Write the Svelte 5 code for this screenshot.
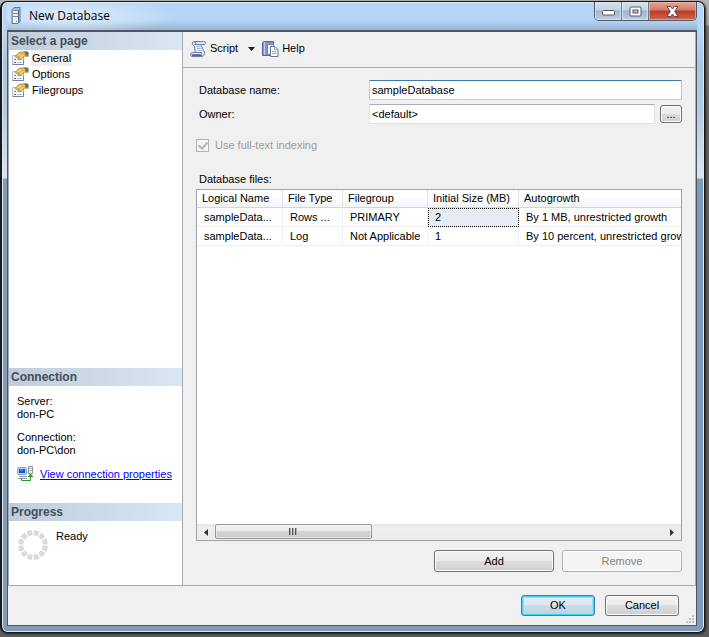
<script>
  let name = $state('sampleDatabase');
  let owner = $state('<default>');
  const pages = ['General', 'Options', 'Filegroups'];
  const columns = ['Logical Name', 'File Type', 'Filegroup', 'Initial Size (MB)', 'Autogrowth'];
  const files = [
    ['sampleData...', 'Rows ...', 'PRIMARY', '2', 'By 1 MB, unrestricted growth'],
    ['sampleData...', 'Log', 'Not Applicable', '1', 'By 10 percent, unrestricted growth']
  ];
  const spokes = Array.from({ length: 12 }, (_, i) => i * 30 + 15);
</script>

<div class="desktop">
  <section class="window" aria-label="New Database">
    <header class="titlebar">
      <svg class="server" width="10" height="17" viewBox="0 0 10 17">
        <path d="M1 2.5 3 .5h6v14l-2 2H1z" fill="#a9bdd2" stroke="#64788f" />
        <path d="M2 3h5v13H2z" fill="#e9f1f8" />
        <path d="M2 3.5h5M2 6.5h5M2 9.5h5" stroke="#6d86a3" />
        <path d="M7.500 3v13" stroke="#5c7089" />
        <path d="M5 14h1v1H5z" fill="#5b9a54" />
      </svg>
      <h1>New Database</h1>
      <div class="caption">
        <button class="cap" aria-label="Minimize">
          <svg class="low" width="13" height="6" viewBox="0 0 13 6"><rect x=".5" y=".5" width="12" height="4.500" rx="1" fill="#fff" stroke="#535a66" /></svg>
        </button>
        <button class="cap" aria-label="Maximize">
          <svg width="13" height="11" viewBox="0 0 13 11"><rect x="1" y="1" width="11" height="9" rx="1" fill="#fff" stroke="#535a66" /><rect x="4" y="4" width="5" height="3" fill="#b5c4d6" stroke="#535a66" /></svg>
        </button>
        <button class="cap close" aria-label="Close">
          <svg width="13" height="11" viewBox="0 0 13 11"><path d="M1 .5h3.500l2 2.500 2-2.500H12L8.700 5.500 12 10.500H8.500l-2-2.500-2 2.500H1l3.300-5z" fill="#fff" stroke="#5e4a55" stroke-linejoin="round" /></svg>
        </button>
      </div>
    </header>

    <div class="client">
      <div class="body">
        <aside>
          <h2>Select a page</h2>
          <nav>
            {#each pages as page, i}
              <button class="page">
                <svg width="17" height="15" viewBox="0 0 17 15">
                  <path d="M.5 4.500h11v9H.5z" fill="#fafbff" stroke="#b4bcd6" />
                  <path d="M.5 13.500h11v-5" fill="none" stroke="#7481a8" />
                  <path d="M2 8.500h2M2 11.500h2" stroke="#5d6cb0" />
                  <path d="M5 8.500h5M5 11.500h5" stroke="#b3bcdd" />
                  <path d="M3 5.500 6 2.300 8.500 1l2 .3 1-.8L15 1.200v4.300L12.500 5l-2 2-3 2L6 7.800l1.300-1.700-2 .6z" fill="#e8b553" stroke="#94783e" stroke-width=".7" />
                  <path d="m6 4.500 3-2M8.500 6.500l3-2.300" stroke="#fff0b5" />
                  <path d="m12.500.5 4 .2v5.200L13.500 4z" fill="#66725c" />
                </svg>
                <span class:current={i === 0}>{page}</span>
              </button>
            {/each}
          </nav>
          <h2>Connection</h2>
          <div class="connection">
            <p>Server:<br />don-PC</p>
            <p>Connection:<br />don-PC\don</p>
            <div class="props">
              <svg width="17" height="16" viewBox="0 0 17 16">
                <rect x=".5" y="1.500" width="9" height="7" rx="1" fill="#b9d1ef" stroke="#88a3cc" />
                <rect x="2" y="3" width="6" height="4" fill="#1557c8" />
                <path d="M3 4h3" stroke="#77b4f5" />
                <path d="M2 10.500h8M1 12.500h9" stroke="#8994a8" />
                <path d="M11.500.5h4v7h-4z" fill="#edf1f7" stroke="#8f97a3" />
                <path d="M12 2.500h3M12 4.500h3" stroke="#b4bcc8" />
                <path d="M4.500 12v2.500h9V10" fill="none" stroke="#2f9a22" />
                <path d="m10.500 11 3-3.500 3 3.500z" fill="#2f9a22" />
              </svg>
              <a href="#connection">View connection properties</a>
            </div>
          </div>
          <h2>Progress</h2>
          <div class="progress">
            <svg width="30" height="30" viewBox="-15 -15 30 30">
              {#each spokes as angle}
                <path d="M-3-14.500Q0-15.500 3-14.500L2-9.500Q0-10-2-9.500z" fill="#dadada" transform="rotate({angle})" />
              {/each}
            </svg>
            <span>Ready</span>
          </div>
        </aside>

        <main>
          <div class="toolbar">
            <button class="tool">
              <svg width="17" height="16" viewBox="0 0 17 16">
                <path d="M4 .5h9.500q2.500 0 2 2-.5 1.500-3 1-1.500.3-.8 2l1.800 4q1.500 1 1 3-.5 3-2.500 3H2q-1.500-.5-1.500-2t2-2h2.700L4.500 5.500Q2.300 4 2.300 2.500T4 .5z" fill="#dce8f5" stroke="#6d80a2" />
                <path d="M4 .8q2 .2 2 1.500T4.500 3.500H13M1 12.500q.5 1 2 1h7.500q2-.5 1-2H5" fill="none" stroke="#6d80a2" />
                <path d="M6.500 5.500h4M7 7.500h4M8 9.500h4" stroke="#aac0dc" />
                <path d="M2 14.500h10" stroke="#53658a" />
              </svg>
              <span>Script</span>
              <svg class="arrow" width="7" height="4" viewBox="0 0 7 4"><path d="M0 0h7L3.500 4z" fill="#1b1b1b" /></svg>
            </button>
            <button class="tool">
              <svg width="17" height="16" viewBox="0 0 17 16">
                <path d="M.5 1.500 2 .5h9.500v14H.5z" fill="#8a92c6" stroke="#5c649b" />
                <path d="M2.500 1v13" stroke="#c9cdec" />
                <path d="M5.500 3.500h6v10h-6z" fill="#eef1fa" stroke="#7b86ad" />
                <path d="M8.500 5.500h4.500l3 3v7H8.500z" fill="#fff" stroke="#6375a0" />
                <path d="M12.500 5.500v3H16M10 10.500h4.500M10 12.500h4.500" fill="none" stroke="#93a6ca" />
              </svg>
              <span>Help</span>
            </button>
          </div>

          <div class="content">
            <div class="fields">
              <label for="dbname">Database name:</label>
              <input id="dbname" class="focused" bind:value={name} />
              <label for="owner">Owner:</label>
              <div class="owner">
                <input id="owner" bind:value={owner} />
                <button class="btn browse" aria-label="Browse for owner">...</button>
              </div>
            </div>

            <label class="check">
              <input type="checkbox" checked disabled />
              <span>Use full-text indexing</span>
            </label>

            <div class="caption-text" id="files-label">Database files:</div>
            <div class="grid">
              <div class="viewport">
                <table aria-labelledby="files-label">
                  <colgroup><col class="c1" /><col class="c2" /><col class="c3" /><col class="c4" /><col class="c5" /></colgroup>
                  <thead>
                    <tr>{#each columns as c}<th>{c}</th>{/each}</tr>
                  </thead>
                  <tbody>
                    {#each files as row, r}
                      <tr>{#each row as cell, c}<td class:selected={r === 0 && c === 3}>{cell}</td>{/each}</tr>
                    {/each}
                  </tbody>
                </table>
              </div>
              <div class="scrollbar">
                <button aria-label="Scroll left"><svg width="4" height="7" viewBox="0 0 4 7"><path d="M4 0v7L0 3.500z" fill="#333" /></svg></button>
                <div class="track">
                  <div class="thumb"><i></i><i></i><i></i></div>
                </div>
                <button aria-label="Scroll right"><svg width="4" height="7" viewBox="0 0 4 7"><path d="M0 0v7l4-3.500z" fill="#333" /></svg></button>
              </div>
            </div>
            <div class="actions">
              <button class="btn wide">Add</button>
              <button class="btn wide" disabled>Remove</button>
            </div>
          </div>
        </main>
      </div>

      <footer>
        <button class="btn default">OK</button>
        <button class="btn">Cancel</button>
        <svg class="grip" width="9" height="9" viewBox="0 0 9 9"><path d="M6 0h2v2H6zM3 3h2v2H3zM6 3h2v2H6zM0 6h2v2H0zM3 6h2v2H3zM6 6h2v2H6z" fill="#c3c3c3" /></svg>
      </footer>
    </div>
  </section>
</div>

<style>
  :global(body) { margin: 0; }
  * { box-sizing: border-box; }
  .desktop {
    min-height: 100vh;
    display: flex;
    padding: 1px 4px 4px 0;
    background: linear-gradient(#b5b5b5 0, #a5a5a5 25px, #777 26px, #626262 130px, #5c5c5c);
    font: 11px/13px "Liberation Sans", Arial, sans-serif;
    color: #000;
  }
  button, input { font: inherit; color: inherit; }
  button { padding: 0; border: 0; background: none; }
  svg { display: block; flex: none; }
  .window {
    flex: 1;
    min-width: 0;
    display: flex;
    flex-direction: column;
    padding: 0 7px 6px 5px;
    border: 1px solid #16191d;
    border-left-width: 2px;
    border-radius: 7px;
    background: linear-gradient(#b4d5f7 0, #b7d6f5 28px, #abc6e1 60px, #b4cbe0 110px, #dce5ef 176px, #829bb8 177px);
    box-shadow: inset 0 0 0 1px #dbe9f5, 1px 1px 2px #222;
  }
  .titlebar {
    display: flex;
    align-items: flex-start;
    height: 28px;
    padding-left: 4px;
    background:
      radial-gradient(ellipse 110px 22px at 60px 14px, #eaf3fdcc, #eaf3fd00),
      linear-gradient(#809ab900 18px, #809ab999 28px);
  }
  .server { margin-top: 5px; }
  h1 {
    flex: 1;
    margin: 6px 0 0 8px;
    font: 12px/16px "Open Sans", "Noto Sans", sans-serif;
  }
  .caption {
    display: flex;
    height: 19px;
    border: 1px solid #4c5a6b;
    border-top: 0;
    border-radius: 0 0 5px 5px;
    overflow: hidden;
  }
  .cap {
    display: flex;
    align-items: center;
    justify-content: center;
    width: 27px;
    border-right: 1px solid #6c7d90;
    background: linear-gradient(#d6e3f0, #c2d1e1 45%, #9fb3c9 50%, #bed1e5);
    box-shadow: inset 0 0 0 1px #e1ebf6aa;
  }
  .low { margin-top: 3px; }
  .cap.close {
    width: 47px;
    border: 0;
    background: linear-gradient(#e6a598, #d5776a 45%, #b93a25 50%, #d2694d);
    box-shadow: inset 0 0 0 1px #f1c4ba99;
  }
  .client {
    flex: 1;
    display: flex;
    flex-direction: column;
    border: 1px solid #4b5765;
    border-top-width: 2px;
    background: #f0f0f0;
  }
  .body {
    flex: 1;
    display: flex;
    border: 1px solid #a9aab0;
    border-top: 0;
  }
  aside {
    flex: none;
    width: 174px;
    display: flex;
    flex-direction: column;
    border-right: 1px solid #a9aab0;
    background: #fff;
  }
  h2 {
    margin: 0;
    padding: 0 2px;
    background: linear-gradient(90deg, #bfccda, #d9e6f3);
    color: #434e58;
    font: bold 12px/18px "Liberation Sans", Arial, sans-serif;
  }
  nav { flex: 1; }
  .page {
    display: flex;
    align-items: center;
    gap: 2px;
    width: 100%;
    height: 16px;
    padding-left: 3px;
  }
  .page span { padding: 1px; line-height: 14px; }
  .page .current { background: #f0f0f0; }
  .connection { padding: 9px 8px 21px; }
  .connection p { margin: 0 0 10px; }
  .connection p + p { margin-bottom: 9px; }
  .props { display: flex; align-items: center; gap: 6px; }
  a { color: #00f; white-space: nowrap; }
  .progress {
    display: flex;
    gap: 8px;
    height: 64px;
    padding: 9px 9px 0;
  }
  main { flex: 1; min-width: 0; display: flex; flex-direction: column; }
  .toolbar {
    display: flex;
    align-items: center;
    gap: 7px;
    height: 36px;
    padding: 0 7px 2px;
    border-bottom: 1px solid #a9aab0;
  }
  .tool { display: flex; align-items: center; gap: 3px; }
  .arrow { margin-left: 7px; }
  .content {
    flex: 1;
    display: flex;
    flex-direction: column;
    padding: 12px 13px 13px;
  }
  .fields {
    display: grid;
    grid-template-columns: 169px minmax(0, 1fr);
    row-gap: 4px;
    column-gap: 1px;
    align-items: center;
    padding-left: 3px;
  }
  .fields input {
    width: 100%;
    height: 20px;
    padding: 0 2px;
    border: 1px solid #e2e3ea;
    border-top-color: #abadb3;
    border-radius: 1px;
    background: #fff;
    outline: 0;
  }
  .fields input.focused { border-color: #3d7bad #a4c9e3 #b7d9ed #b5cfe7; }
  .owner { display: flex; gap: 5px; align-items: center; }
  .owner input { flex: 1; min-width: 0; }
  .btn {
    width: 74px;
    height: 21px;
    border: 1px solid #707070;
    border-radius: 3px;
    background: linear-gradient(#f2f2f2, #ebebeb 49%, #dddddd 50%, #cfcfcf);
    box-shadow: inset 0 0 0 1px #fcfcfc;
  }
  .btn.wide { width: 120px; height: 22px; }
  .btn.browse { width: 22px; height: 18px; }
  .btn:disabled { border-color: #adb2b5; background: #f4f4f4; color: #838383; }
  .btn.default {
    border-color: #3c7fb1;
    background: linear-gradient(#e4eef6, #dbe7f1 49%, #c8dbe9 50%, #bfd3e2);
    box-shadow: inset 0 0 0 1px #43d3f7, inset 0 0 0 2px #8fe3f9;
  }
  .check { display: flex; align-items: center; gap: 6px; margin-top: 15px; color: #9b9b9b; }
  .check input {
    appearance: none;
    width: 13px;
    height: 13px;
    margin: 0;
    border: 1px solid #b1b1b1;
    background: #f5f5f5;
    display: grid;
    place-items: center;
  }
  .check input::after {
    content: "";
    width: 4px;
    height: 7px;
    border: solid #b5b5b5;
    border-width: 0 2px 2px 0;
    transform: translateY(-1px) rotate(40deg);
  }
  .caption-text { margin: 21px 0 3px 3px; }
  .grid {
    flex: 1;
    display: flex;
    flex-direction: column;
    border: 1px solid #a0a2a8;
    background: #fff;
  }
  .viewport { flex: 1; overflow: hidden; }
  table { width: 536px; table-layout: fixed; border-collapse: separate; border-spacing: 0; }
  .c1 { width: 86px; }
  .c2 { width: 60px; }
  .c3 { width: 85px; }
  .c4 { width: 91px; }
  th, td { overflow: hidden; white-space: nowrap; text-align: left; font-weight: normal; }
  th {
    height: 18px;
    padding: 0 0 0 5px;
    border-right: 1px solid #e2e3e5;
    border-bottom: 1px solid #d5d5d5;
    background: linear-gradient(#fff 40%, #f2f4f7);
  }
  td {
    height: 19px;
    padding: 0 0 0 7px;
    border-right: 1px solid #f0f0f0;
    border-bottom: 1px solid #f0f0f0;
  }
  td.selected { background: #e6ecf1; outline: 1px dotted #000; outline-offset: -1px; }
  .scrollbar { display: flex; height: 16px; background: linear-gradient(#e6e6e6, #efefef 4px, #ebebeb); }
  .scrollbar button { display: grid; place-items: center; width: 18px; }
  .track { flex: 1; display: flex; }
  .thumb {
    display: flex;
    align-items: center;
    justify-content: center;
    gap: 1px;
    width: 35%;
    height: 15px;
    border: 1px solid #979797;
    border-radius: 2px;
    background: linear-gradient(#f4f4f4, #e8e8e8 49%, #d5d5d5 50%, #c9c9c9);
    box-shadow: inset 0 0 0 1px #fafafa99;
  }
  .thumb i { width: 2px; height: 7px; border-left: 1px solid #555; border-right: 1px solid #aaa; }
  .actions { display: flex; justify-content: flex-end; gap: 8px; margin-top: 9px; }
  footer {
    position: relative;
    display: flex;
    justify-content: flex-end;
    gap: 10px;
    height: 39px;
    padding: 9px 17px 0 0;
  }
  .grip { position: absolute; right: 1px; bottom: 1px; }
</style>
